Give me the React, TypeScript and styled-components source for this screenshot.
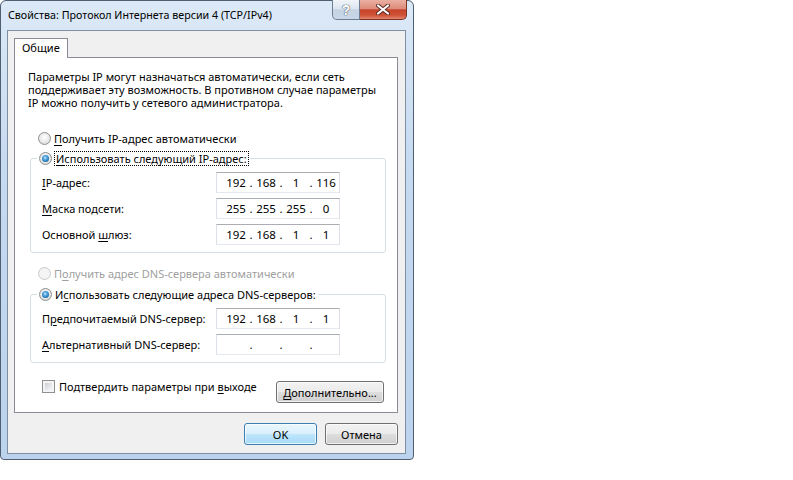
import React from 'react';
import styled, { createGlobalStyle } from 'styled-components';

const GlobalStyle = createGlobalStyle`
  html, body {
    margin: 0;
    background: #fff;
  }
  body {
    font-family: "Noto Sans", "Liberation Sans", sans-serif;
    font-size: 11px;
    color: #000;
  }
`;

const Window = styled.div`
  width: 414px;
  height: 460px;
  box-sizing: border-box;
  border: 1px solid #4f5f72;
  border-radius: 6px 6px 4px 4px;
  background: linear-gradient(#dce9f7, #c6daf0 35%, #bcd3ed);
  display: flex;
  flex-direction: column;
`;

const TitleBar = styled.div`
  height: 29px;
  display: flex;
  justify-content: space-between;
  align-items: flex-start;
`;

const Title = styled.div`
  line-height: 29px;
  padding-left: 7px;
  white-space: nowrap;
  font-size: 10.7px;
`;

const Caption = styled.div`
  display: flex;
  margin-right: 6px;
  margin-top: -1px;
`;

const CaptionButton = styled.div<{ $close?: boolean }>`
  height: 20px;
  width: ${p => (p.$close ? '47px' : '28px')};
  box-sizing: border-box;
  border: 1px solid ${p => (p.$close ? '#7a3527' : '#6e7e92')};
  border-top: none;
  border-left-width: ${p => (p.$close ? '0' : '1px')};
  border-radius: ${p => (p.$close ? '0 0 5px 0' : '0 0 0 5px')};
  background: ${p =>
    p.$close
      ? 'linear-gradient(#eab0a2 0%, #dd8d7b 45%, #c8442b 52%, #cf5237 80%, #e2866b 100%)'
      : 'linear-gradient(#f1f5fa 0%, #dde6f0 45%, #c5d2e2 52%, #c9d7e8 100%)'};
  display: flex;
  align-items: center;
  justify-content: center;
  color: #fff;
  font-family: "Liberation Sans", sans-serif;
  font-weight: bold;
  font-size: 14px;
  text-shadow: 0 0 1px #55606e, 0 0 1px #55606e, 0 0 1px #55606e;
`;

const Client = styled.div`
  flex: 1;
  margin: 0 7px 5px 6px;
  border: 1px solid #7e8fa3;
  background: #f0f0f0;
  padding: 7px 7px 0 6px;
  display: flex;
  flex-direction: column;
`;

const Tabs = styled.div`
  display: flex;
`;

const Tab = styled.div`
  height: 20px;
  box-sizing: border-box;
  padding: 0 7px;
  line-height: 18px;
  border: 1px solid #898c95;
  border-bottom: none;
  background: #fff;
  margin-bottom: -1px;
  position: relative;
  z-index: 1;
`;

const Panel = styled.div`
  height: 356px;
  box-sizing: border-box;
  border: 1px solid #898c95;
  background: #fff;
  padding: 12px 11px 0 13px;
  display: flex;
  flex-direction: column;
  white-space: nowrap;
`;

const Intro = styled.p`
  margin: 0;
  line-height: 13px;
`;

const RadioRow = styled.label<{ $disabled?: boolean }>`
  display: flex;
  align-items: center;
  height: 16px;
  gap: 3px;
  color: ${p => (p.$disabled ? '#a0a0a0' : '#000')};
`;

const PlainRadioRow = styled(RadioRow)<{ $top: number }>`
  margin-left: 10px;
  margin-top: ${p => p.$top}px;
`;

const Radio = styled.span<{ $checked?: boolean; $disabled?: boolean }>`
  width: 13px;
  height: 13px;
  box-sizing: border-box;
  border-radius: 50%;
  border: 1px solid ${p => (p.$disabled ? '#c9c9c9' : '#8e8f8f')};
  background: ${p =>
    p.$disabled
      ? '#f4f4f4'
      : 'radial-gradient(circle at 50% 40%, #ffffff, #e6e6e6 60%, #cfcfcf)'};
  display: flex;
  align-items: center;
  justify-content: center;
  flex: none;

  &::after {
    content: '';
    display: ${p => (p.$checked ? 'block' : 'none')};
    width: 7px;
    height: 7px;
    border-radius: 50%;
    background: radial-gradient(circle at 45% 40%, #b9e4fb 0%, #3c92d2 45%, #0f4c86 100%);
  }
`;

const FocusText = styled.span`
  outline: 1px dotted #000;
  outline-offset: 0;
  padding: 0 1px;
  line-height: 13px;
`;

const Group = styled.fieldset<{ $top: number }>`
  margin: ${p => p.$top}px 0 0 2px;
  padding: 6px 11px 7px 11px;
  border: 1px solid #d5dfe5;
  border-radius: 3px;
  display: flex;
  flex-direction: column;
  gap: 5px;
`;

const Legend = styled.legend`
  margin-left: -5px;
  padding: 0 2px;
`;

const FieldRow = styled.div`
  display: grid;
  grid-template-columns: 174px 124px;
  align-items: center;
  height: 21px;
`;

const IpBox = styled.div`
  height: 21px;
  box-sizing: border-box;
  border: 1px solid #dbdfe6;
  border-top-color: #abadb3;
  border-bottom-color: #e3e9ef;
  background: #fff;
  display: flex;
  align-items: center;
  padding-left: 8px;
  font-size: 11.5px;
`;

const Octet = styled.span`
  width: 22px;
  text-align: center;
`;

const Dot = styled.span`
  width: 8px;
  text-align: center;
`;

const U = styled.span`
  text-decoration: underline;
  text-underline-offset: 2px;
`;

const BottomRow = styled.div`
  display: flex;
  justify-content: space-between;
  align-items: flex-start;
  margin: 15px 2px 0 14px;
`;

const CheckRow = styled.label`
  display: flex;
  align-items: center;
  gap: 4px;
  height: 16px;
`;

const Checkbox = styled.span`
  width: 13px;
  height: 13px;
  box-sizing: border-box;
  border: 1px solid #8e8f8f;
  padding: 2px;
  background: #f4f4f4;
  &::after {
    content: '';
    display: block;
    width: 100%;
    height: 100%;
    background: linear-gradient(135deg, #cbcfd5, #f7f7f7);
  }
`;

const Button = styled.div<{ $width: number; $default?: boolean; $top?: number }>`
  width: ${p => p.$width}px;
  height: 22px;
  margin-top: ${p => p.$top ?? 0}px;
  box-sizing: border-box;
  border: 1px solid ${p => (p.$default ? '#3c7fb1' : '#707070')};
  border-radius: 3px;
  background: ${p =>
    p.$default
      ? 'linear-gradient(#eaf6fd 0%, #d9f0fc 48%, #bee6fd 52%, #a7d9f5 100%)'
      : 'linear-gradient(#f2f2f2 0%, #ebebeb 48%, #dddddd 52%, #cfcfcf 100%)'};
  box-shadow: inset 0 0 0 1px rgba(255, 255, 255, 0.7);
  display: flex;
  align-items: center;
  justify-content: center;
`;

const DialogButtons = styled.div`
  display: flex;
  justify-content: flex-end;
  gap: 8px;
  margin-top: 10px;
`;

function IpField({ parts }: { parts: string[] }) {
  return (
    <IpBox>
      {parts.map((p, i) => (
        <React.Fragment key={i}>
          {i > 0 && <Dot>.</Dot>}
          <Octet>{p}</Octet>
        </React.Fragment>
      ))}
    </IpBox>
  );
}

export default function App() {
  return (
    <>
      <GlobalStyle />
      <Window>
        <TitleBar>
          <Title>Свойства: Протокол Интернета версии 4 (TCP/IPv4)</Title>
          <Caption>
            <CaptionButton>?</CaptionButton>
            <CaptionButton $close>
              <svg width="14" height="11" viewBox="0 0 14 11">
                <path d="M2 1.5 L12 9.5 M12 1.5 L2 9.5" stroke="#5a2a22" strokeWidth="4" strokeLinecap="round" />
                <path d="M2 1.5 L12 9.5 M12 1.5 L2 9.5" stroke="#fff" strokeWidth="2.2" strokeLinecap="round" />
              </svg>
            </CaptionButton>
          </Caption>
        </TitleBar>
        <Client>
          <Tabs>
            <Tab>Общие</Tab>
          </Tabs>
          <Panel>
            <Intro>
              Параметры IP могут назначаться автоматически, если сеть
              <br />
              поддерживает эту возможность. В противном случае параметры
              <br />
              IP можно получить у сетевого администратора.
            </Intro>

            <PlainRadioRow $top={21}>
              <Radio />
              <span>
                <U>П</U>олучить IP-адрес автоматически
              </span>
            </PlainRadioRow>

            <Group $top={4}>
              <Legend>
                <RadioRow>
                  <Radio $checked />
                  <FocusText>
                    <U>И</U>спользовать следующий IP-адрес:
                  </FocusText>
                </RadioRow>
              </Legend>
              <FieldRow>
                <span>
                  <U>I</U>P-адрес:
                </span>
                <IpField parts={['192', '168', '1', '116']} />
              </FieldRow>
              <FieldRow>
                <span>
                  <U>М</U>аска подсети:
                </span>
                <IpField parts={['255', '255', '255', '0']} />
              </FieldRow>
              <FieldRow>
                <span>
                  Основной <U>ш</U>люз:
                </span>
                <IpField parts={['192', '168', '1', '1']} />
              </FieldRow>
            </Group>

            <PlainRadioRow $top={12} $disabled>
              <Radio $disabled />
              <span>
                П<U>о</U>лучить адрес DNS-сервера автоматически
              </span>
            </PlainRadioRow>

            <Group $top={5}>
              <Legend>
                <RadioRow>
                  <Radio $checked />
                  <span>
                    И<U>с</U>пользовать следующие адреса DNS-серверов:
                  </span>
                </RadioRow>
              </Legend>
              <FieldRow>
                <span>
                  П<U>р</U>едпочитаемый DNS-сервер:
                </span>
                <IpField parts={['192', '168', '1', '1']} />
              </FieldRow>
              <FieldRow>
                <span>
                  <U>А</U>льтернативный DNS-сервер:
                </span>
                <IpField parts={['', '', '', '']} />
              </FieldRow>
            </Group>

            <BottomRow>
              <CheckRow>
                <Checkbox />
                <span>
                  Подтвердить параметры при <U>в</U>ыходе
                </span>
              </CheckRow>
              <Button $width={108} $top={3}>
                <span>
                  <U>Д</U>ополнительно...
                </span>
              </Button>
            </BottomRow>
          </Panel>
          <DialogButtons>
            <Button $width={73} $default>
              OK
            </Button>
            <Button $width={73}>Отмена</Button>
          </DialogButtons>
        </Client>
      </Window>
    </>
  );
}
